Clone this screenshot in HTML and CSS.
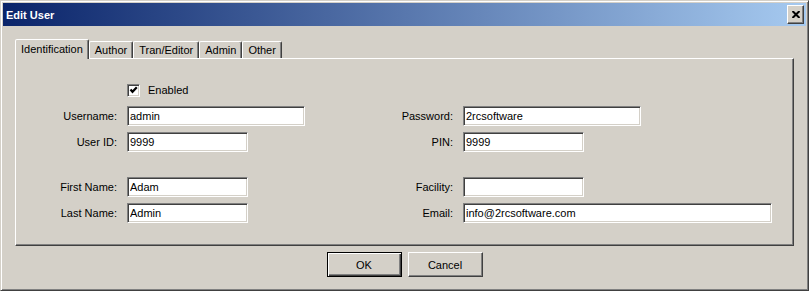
FILE: index.html
```html
<!DOCTYPE html>
<html lang="en">
<head>
  <meta charset="UTF-8">
  <meta name="viewport" content="width=device-width, initial-scale=1.0">
  <title>Edit User</title>
  <link rel="stylesheet" href="styles.css">
</head>
<body>
  <div class="window">
    <div class="titlebar">
      <span class="title">Edit User</span>
      <button class="close-btn" aria-label="Close">
        <svg width="8" height="7" viewBox="0 0 8 7">
          <path d="M0.5 0 L7.5 7 M7.5 0 L0.5 7" stroke="#000" stroke-width="2"/>
        </svg>
      </button>
    </div>
    <div class="content">
      <div class="tabs">
        <div class="tab selected">Identification</div>
        <div class="tab">Author</div>
        <div class="tab">Tran/Editor</div>
        <div class="tab">Admin</div>
        <div class="tab">Other</div>
      </div>
      <div class="panel">
        <div class="form">
          <label class="check">
            <span class="check-box">
              <svg width="9" height="9" viewBox="0 0 9 9">
                <path d="M1.5 3.5 L3.5 5.8 L7.8 1.2" fill="none" stroke="#000" stroke-width="2.2"/>
              </svg>
            </span>
            Enabled
          </label>

          <span class="label">Username:</span>
          <input class="field field-wide" value="admin">
          <span class="label">Password:</span>
          <input class="field field-wide" value="2rcsoftware">

          <span class="label">User ID:</span>
          <input class="field field-short" value="9999">
          <span class="label">PIN:</span>
          <input class="field field-short" value="9999">

          <div class="spacer"></div>

          <span class="label">First Name:</span>
          <input class="field field-short" value="Adam">
          <span class="label">Facility:</span>
          <input class="field field-short" value="">

          <span class="label">Last Name:</span>
          <input class="field field-short" value="Admin">
          <span class="label">Email:</span>
          <input class="field field-email" value="info@2rcsoftware.com">
        </div>
      </div>
      <div class="actions">
        <button class="btn default">OK</button>
        <button class="btn">Cancel</button>
      </div>
    </div>
  </div>
</body>
</html>
```

FILE: styles.css
```css
* {
  box-sizing: border-box;
}
body {
  margin: 0;
  background-color: #d4d0c8;
  font-family: "Liberation Sans", Arial, sans-serif;
  font-size: 11px;
  color: #000;
}
.window {
  width: 809px;
  height: 291px;
  padding: 2px;
  background-color: #d4d0c8;
  border: 1px solid;
  border-color: #d4d0c8 #404040 #404040 #d4d0c8;
  box-shadow: inset 1px 1px #fff, inset -1px -1px #808080;
}
.titlebar {
  height: 23px;
  display: flex;
  align-items: center;
  justify-content: space-between;
  padding: 0 2px 0 3px;
  background: linear-gradient(to right, #0a246a, #a6caf0);
}
.title {
  color: #fff;
  font-weight: bold;
}
.close-btn {
  width: 17px;
  height: 19px;
  padding: 0;
  display: flex;
  align-items: center;
  justify-content: center;
  background-color: #d4d0c8;
  border: 1px solid;
  border-color: #fff #404040 #404040 #fff;
  box-shadow: inset -1px -1px #808080;
}
.content {
  padding: 13px 12px 0;
}
.tabs {
  display: flex;
  align-items: flex-end;
  height: 19px;
}
.tab {
  height: 17px;
  padding: 0 5px;
  display: flex;
  align-items: center;
  border: 1px solid;
  border-bottom: none;
  border-color: #fff #404040 transparent #fff;
  border-radius: 2px 2px 0 0;
  box-shadow: inset -1px 0 #808080;
}
.tab.selected {
  height: 20px;
  margin-bottom: -1px;
  padding: 0 5px 2px;
  background-color: #d4d0c8;
  position: relative;
  z-index: 1;
}
.panel {
  height: 188px;
  padding-top: 21px;
  border: 1px solid;
  border-color: #fff #404040 #404040 #fff;
  box-shadow: inset -1px -1px #808080;
}
.form {
  display: grid;
  grid-template-columns: 101px 178px 138px 309px;
  grid-template-rows: 20px 20px 20px 13px 20px 20px;
  column-gap: 10px;
  row-gap: 6px;
  align-items: center;
}
.check {
  grid-column: 2 / span 3;
  display: flex;
  align-items: center;
  gap: 8px;
}
.check-box {
  width: 13px;
  height: 13px;
  display: flex;
  align-items: center;
  justify-content: center;
  background-color: #fff;
  border: 1px solid;
  border-color: #808080 #fff #fff #808080;
  box-shadow: inset 1px 1px #404040, inset -1px -1px #d4d0c8;
}
.label {
  text-align: right;
}
.spacer {
  grid-column: 1 / -1;
}
.field {
  height: 20px;
  padding: 0 2px;
  font: inherit;
  color: #000;
  background-color: #fff;
  border: 1px solid;
  border-color: #808080 #fff #fff #808080;
  box-shadow: inset 1px 1px #404040, inset -1px -1px #d4d0c8;
  outline: none;
}
.field-wide {
  width: 178px;
}
.field-short {
  width: 121px;
}
.field-email {
  width: 309px;
}
.actions {
  display: flex;
  justify-content: center;
  gap: 6px;
  margin-top: 6px;
}
.btn {
  width: 75px;
  height: 25px;
  padding: 0;
  font: inherit;
  color: #000;
  background-color: #d4d0c8;
  border: 1px solid;
  border-color: #fff #404040 #404040 #fff;
  box-shadow: inset -1px -1px #808080;
}
.btn.default {
  border-color: #000;
  box-shadow: inset 1px 1px #fff, inset -1px -1px #404040, inset -2px -2px #808080;
}
```
